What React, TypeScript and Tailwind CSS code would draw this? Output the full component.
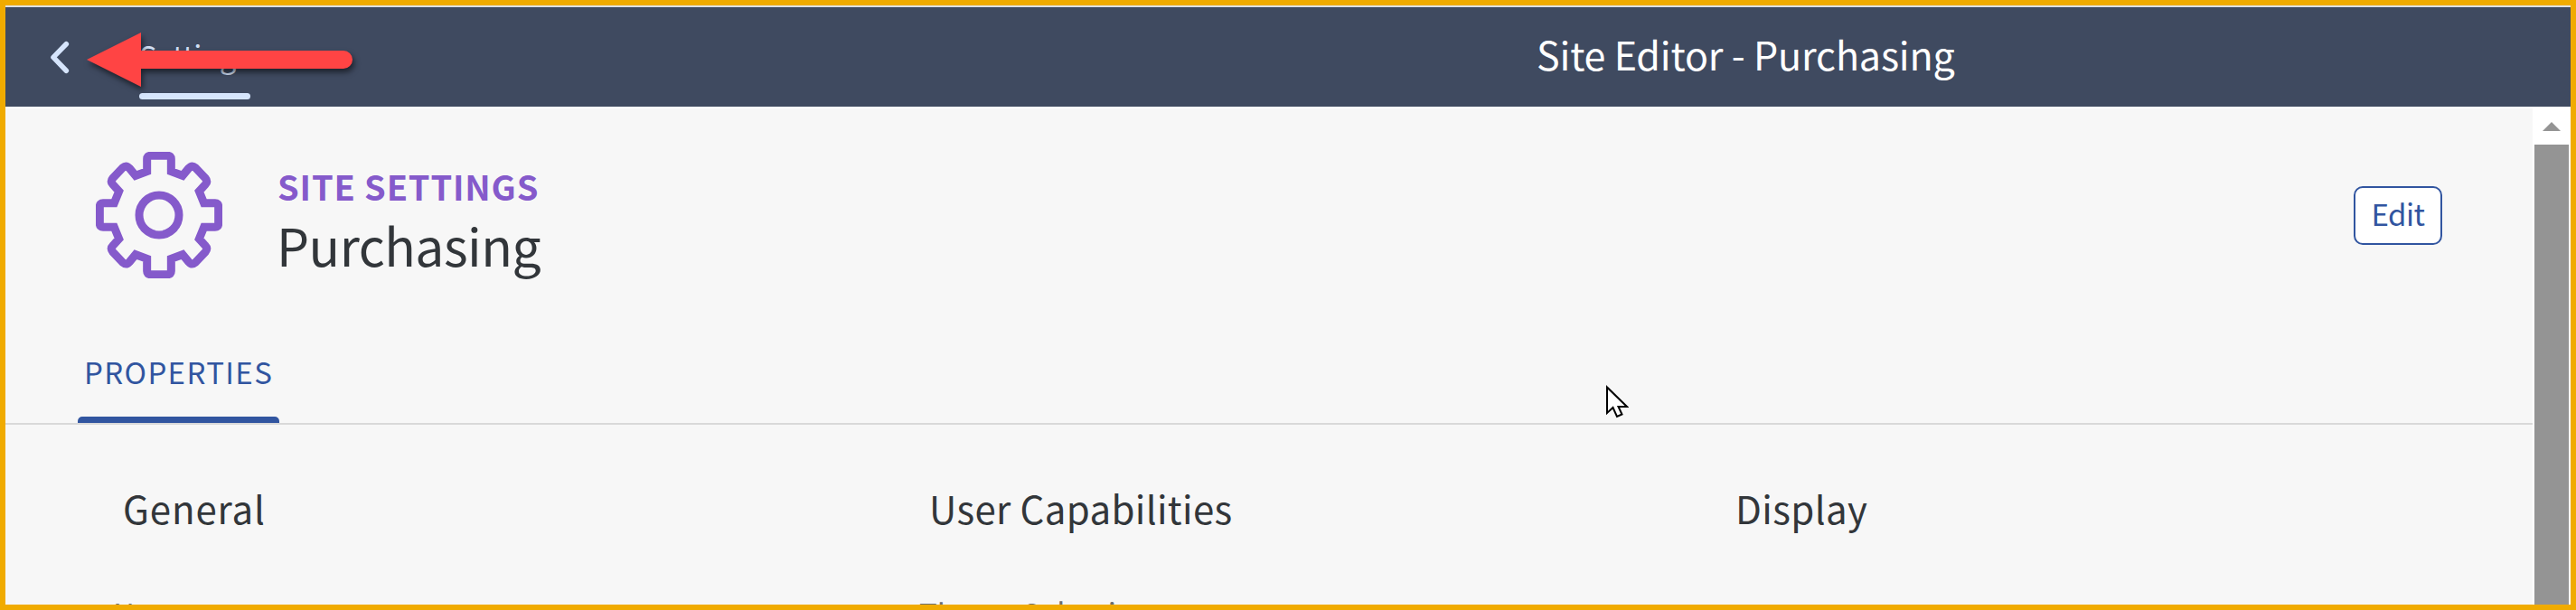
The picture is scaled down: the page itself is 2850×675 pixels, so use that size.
const sections = [
  { title: "General", spacing: "tracking-[0.85px]", field: "Name:" },
  { title: "User Capabilities", spacing: "tracking-[0.36px]", field: "Theme Selection:" },
  { title: "Display", spacing: "tracking-[0.4px]", field: "" },
];

function GearIcon() {
  return (
    <svg className="size-[140px] shrink-0" viewBox="-210 -210 420 420" fill="none" stroke="#855acb" strokeWidth="27">
      <path d="M-40-186Q-40-197-29-197H29Q40-197 40-186V-145L78-131L98-155Q109-167 121-157L153-123Q163-111 153-101L133-79L149-40H186Q197-40 197-29V29Q197 40 186 40H149L133 79L153 101Q163 111 153 123L121 157Q109 167 98 155L78 131L40 145V186Q40 197 29 197H-29Q-40 197-40 186V145L-78 131L-98 155Q-109 167-121 157L-153 123Q-163 111-153 101L-133 79L-149 40H-186Q-197 40-197 29V-29Q-197-40-186-40H-149L-133-79L-153-101Q-163-111-153-123L-121-157Q-109-167-98-155L-78-131L-40-145Z" />
      <circle r="66" />
    </svg>
  );
}

function Header() {
  return (
    <header className="flex h-[112px] shrink-0 border-t-2 border-[#dfe1e4] bg-[#3f4a60]">
      <button className="mt-[37px] ml-[49px] h-[37px] w-[24px]" aria-label="Back">
        <svg viewBox="0 0 24 37" className="h-[37px] w-[24px]" fill="none" stroke="#d6e5fc" strokeWidth="5.6" strokeLinecap="round" strokeLinejoin="round">
          <path d="M18.3 3.8L4 18.4L18.3 33.2" />
        </svg>
      </button>
      <div className="ml-[75px] flex w-[123px] flex-col pt-[33px]">
        <span className="text-[33px] leading-[40px] tracking-[-0.35px] whitespace-nowrap text-[#d1dff5]">Settings</span>
        <span className="mt-[22px] h-[7px] rounded-full bg-[#d6e5fc]" />
      </div>
      <h1 className="mt-[21px] ml-[1423px] text-[43px] leading-[60px] tracking-[-0.16px] whitespace-nowrap text-white">
        Site Editor - Purchasing
      </h1>
    </header>
  );
}

function Scrollbar() {
  return (
    <div className="flex w-[42px] shrink-0 flex-col items-center bg-white">
      <svg viewBox="0 0 20 10" className="mt-[17px] h-[10px] w-[20px]" fill="#949494">
        <path d="M10 0L20 10H0Z" />
      </svg>
      <div className="mt-[15px] w-[38px] grow bg-[#949494]" />
    </div>
  );
}

export default function App() {
  return (
    <div className="relative flex h-[675px] w-[2850px] flex-col overflow-hidden border-[6px] border-[#f0ab00] bg-[#f7f7f7] font-['Noto_Sans_CJK_SC',sans-serif] text-[#32363a]">
      <Header />
      <div className="flex min-h-0 grow">
        <main className="flex w-[2796px] flex-col overflow-hidden border-t-2 border-white">
          <div className="flex pt-[48px] pl-[100px]">
            <GearIcon />
            <div className="ml-[61px] flex flex-col pt-[13px]">
              <span className="text-[38px] leading-[50px] font-bold tracking-[0.82px] text-[#855acb]">SITE SETTINGS</span>
              <h2 className="mt-[4px] -ml-px text-[57px] leading-[70px] tracking-[-0.5px]">Purchasing</h2>
            </div>
            <button className="mt-[38px] mr-[100px] ml-auto flex h-[65px] w-[98px] items-center justify-center rounded-[10px] border-2 border-[#3155a0] bg-white pb-[6px] text-[33px] leading-[40px] tracking-[-0.5px] text-[#3155a0]">
              Edit
            </button>
          </div>
          <nav className="mt-[82px] flex h-[80px] shrink-0 border-b-2 border-[#d9d9d9] pl-[80px]">
            <div className="flex w-[223px] flex-col justify-between">
              <span className="pt-px pl-[7px] text-[33px] leading-[40px] tracking-[1.35px] text-[#3155a0]">PROPERTIES</span>
              <span className="h-[7px] rounded-t-[5px] bg-[#3155a0]" />
            </div>
          </nav>
          <div className="grid grid-cols-[892px_892px_892px] pt-[62px] pl-[119px]">
            {sections.map((s) => (
              <section key={s.title} className="flex flex-col">
                <h3 className={`pl-[11px] text-[42px] leading-[60px] ${s.spacing}`}>{s.title}</h3>
                <label className="mt-[66px] h-[40px] text-[33px] leading-[40px] text-[#6a6d70]">{s.field}</label>
              </section>
            ))}
          </div>
        </main>
        <Scrollbar />
      </div>

      <svg className="absolute top-[20px] left-[80px] h-[90px] w-[320px] overflow-visible drop-shadow-[2px_4px_3px_rgba(0,0,0,0.55)]" viewBox="0 0 320 90" fill="#ff4444">
        <path d="M10 40L70 10V30H294A10 10 0 0 1 294 50H70V70Z" />
      </svg>
      <svg className="absolute top-[420px] left-[1771px] h-[37px] w-[25px]" viewBox="0 0 25 37" fill="white" stroke="black" strokeWidth="2">
        <path d="M1 2.5V31L7.5 25L12 35L17.5 32.5L13.5 24H23Z" />
      </svg>
    </div>
  );
}
